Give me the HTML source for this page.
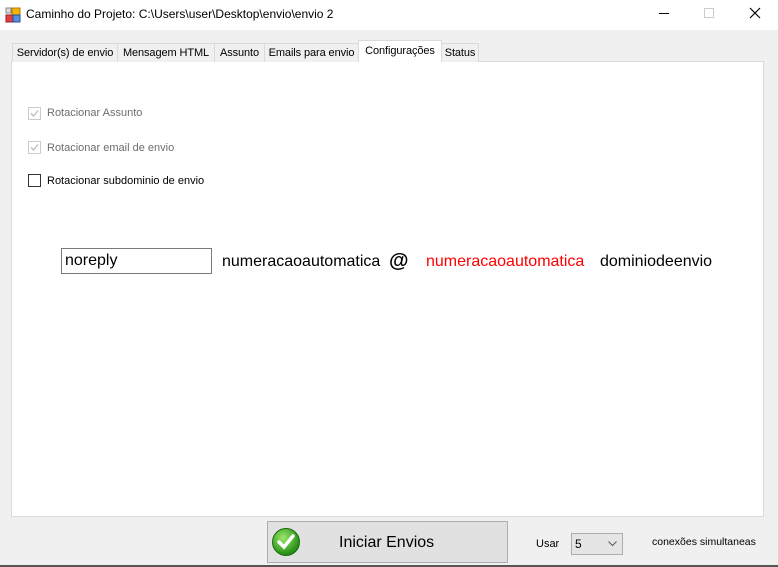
<!DOCTYPE html>
<html><head><meta charset="utf-8"><style>
*{margin:0;padding:0;box-sizing:border-box}
body{width:778px;height:567px;background:#f0f0f0;font-family:"Liberation Sans",sans-serif;font-size:12px;color:#000;position:relative;overflow:hidden}
.a{position:absolute;white-space:nowrap}
.title{left:0;top:0;width:778px;height:30px;background:#fff}
.tab{top:43px;height:19px;border:1px solid #dadada;border-bottom:none;background:#f0f0f0;font-size:11px;line-height:18px;text-align:center;letter-spacing:-0.1px}
.panel{left:11px;top:61px;width:753px;height:456px;background:#fff;border:1px solid #dadada}
.cb{width:13px;height:13px;border:1px solid #bcbcbc;background:#fff}
.lbl{font-size:11px}
</style></head><body>
<div class="a title"></div>
<svg class="a" style="left:5px;top:7px" width="16" height="16"><rect x="7" y="1" width="8" height="7" fill="#f4b400" stroke="#b07a00"/><rect x="1" y="8" width="7" height="7" fill="#e04040" stroke="#902020"/><rect x="8" y="8" width="7" height="7" fill="#5a8ee0" stroke="#2050a0"/><rect x="1" y="1" width="5" height="5" fill="#ddd" stroke="#888"/></svg>
<div class="a" style="left:26px;top:7px;font-size:12px">Caminho do Projeto: C:\Users\user\Desktop\envio\envio 2</div>
<div class="a" style="left:659px;top:13px;width:10px;height:1px;background:#000"></div>
<div class="a" style="left:704px;top:8px;width:10px;height:10px;border:1px solid #ccc"></div>
<svg class="a" style="left:749px;top:7px" width="12" height="12"><path d="M1 1L11 11M11 1L1 11" stroke="#000" stroke-width="1.2"/></svg>

<div class="a panel"></div>
<div class="a tab" style="left:12px;width:106px">Servidor(s) de envio</div>
<div class="a tab" style="left:117px;width:98px">Mensagem HTML</div>
<div class="a tab" style="left:214px;width:51px">Assunto</div>
<div class="a tab" style="left:264px;width:95px">Emails para envio</div>
<div class="a tab" style="left:358px;top:40px;height:22px;width:84px;background:#fff;line-height:20px">Configurações</div>
<div class="a tab" style="left:441px;width:38px">Status</div>

<div class="a cb" style="left:28px;top:107px;border-color:#ccc"></div>
<svg class="a" style="left:29px;top:108px" width="11" height="11"><path d="M2 5.5L4.5 8L9 2.5" stroke="#bbb" stroke-width="1.3" fill="none"/></svg>
<div class="a lbl" style="left:47px;top:107px;color:#6d6d6d">Rotacionar Assunto</div>
<div class="a cb" style="left:28px;top:141px;border-color:#ccc"></div>
<svg class="a" style="left:29px;top:142px" width="11" height="11"><path d="M2 5.5L4.5 8L9 2.5" stroke="#bbb" stroke-width="1.3" fill="none"/></svg>
<div class="a lbl" style="left:47px;top:142px;color:#6d6d6d">Rotacionar email de envio</div>
<div class="a cb" style="left:28px;top:174px;border-color:#333"></div>
<div class="a lbl" style="left:47px;top:175px">Rotacionar subdominio de envio</div>

<div class="a" style="left:61px;top:248px;width:151px;height:26px;border:1px solid #7a7a7a;background:#fff;font-size:16px;line-height:24px;padding-left:3px">noreply</div>
<div class="a" style="left:222px;top:253px;font-size:16px">numeracaoautomatica</div>
<div class="a" style="left:389px;top:250px;font-size:20px;font-weight:900">@</div>
<div class="a" style="left:426px;top:253px;font-size:16px;color:#f00">numeracaoautomatica</div>
<div class="a" style="left:600px;top:253px;font-size:16px">dominiodeenvio</div>

<div class="a" style="left:267px;top:521px;width:241px;height:42px;border:1px solid #adadad;background:#e1e1e1"></div>
<svg class="a" style="left:271px;top:527px" width="30" height="30"><defs><radialGradient id="g" cx="40%" cy="35%" r="65%"><stop offset="0" stop-color="#9be86a"/><stop offset="1" stop-color="#1f8a10"/></radialGradient></defs><circle cx="15" cy="15" r="13.5" fill="url(#g)" stroke="#186a0e"/><path d="M8 15L13 20L22 9" stroke="#fff" stroke-width="3.5" fill="none" stroke-linecap="round"/></svg>
<div class="a" style="left:339px;top:534px;font-size:16px">Iniciar Envios</div>

<div class="a" style="left:536px;top:538px;font-size:11px">Usar</div>
<div class="a" style="left:571px;top:533px;width:52px;height:22px;border:1px solid #adadad;background:#e5e5e5;font-size:12px;line-height:20px;padding-left:3px">5</div>
<svg class="a" style="left:608px;top:541px" width="9" height="6"><path d="M0.5 0.5L4.5 4.5L8.5 0.5" stroke="#555" fill="none"/></svg>
<div class="a" style="left:652px;top:536px;font-size:10.5px">conexões simultaneas</div>

<div class="a" style="left:0;top:565px;width:778px;height:2px;background:#555"></div>
</body></html>
